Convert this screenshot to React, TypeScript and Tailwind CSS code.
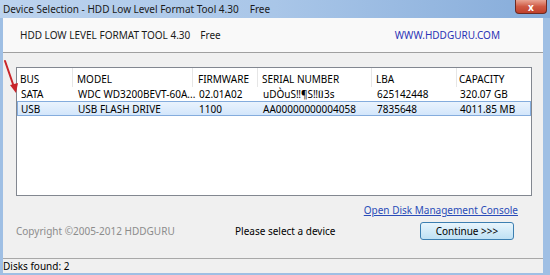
import React from "react";

const COLUMNS = ["BUS", "MODEL", "FIRMWARE", "SERIAL NUMBER", "LBA", "CAPACITY"];

const DEVICES = [
  {
    bus: "SATA",
    model: "WDC WD3200BEVT-60A...",
    firmware: "02.01A02",
    serial: "uDÒuS‼¶S‼⌷3s",
    lba: "625142448",
    capacity: "320.07 GB",
    selected: false,
  },
  {
    bus: "USB",
    model: "USB FLASH DRIVE",
    firmware: "1100",
    serial: "AA00000000004058",
    lba: "7835648",
    capacity: "4011.85 MB",
    selected: true,
  },
];

const gridCols = "grid grid-cols-[56px_120px_65px_114px_85px_1fr]";

function DeviceRow({ d }: { d: (typeof DEVICES)[number] }) {
  return (
    <div
      className={`${gridCols} h-[15px] items-center ${
        d.selected
          ? "border border-[#84acdd] bg-gradient-to-b from-[#eaf3fd] to-[#d3e6fb]"
          : "border border-transparent"
      }`}
    >
      <span className="pl-[3px]">{d.bus}</span>
      <span className="pl-[4px] whitespace-nowrap">{d.model}</span>
      <span className="pl-[5px]">{d.firmware}</span>
      <span className="pl-[4px] whitespace-nowrap">{d.serial}</span>
      <span className="pl-[4px]">{d.lba}</span>
      <span className="pl-[2px]">{d.capacity}</span>
    </div>
  );
}

export default function App() {
  return (
    <div className="relative flex h-[275px] w-[550px] flex-col overflow-hidden bg-[#9fbfe4] font-['Noto_Sans',sans-serif] text-[10px] text-black">
      {/* title bar */}
      <div className="flex h-[18px] shrink-0 items-center bg-gradient-to-r from-[#bcd3ee] via-[#a9c6e8] to-[#86acda] pl-[3px] text-[10px] text-[#1a1a1a]">
        <span>Device Selection - HDD Low Level Format Tool 4.30</span>
        <span className="ml-[11px]">Free</span>
      </div>

      <div className="flex min-h-0 flex-1 pl-[3px] pr-[7px] pb-[2px]">
        <div className="flex flex-1 flex-col bg-[#f0f0f0]">
          {/* header panel */}
          <div className="flex h-[35px] shrink-0 items-center justify-between border-b border-[#a0a0a0] bg-[#f9f9f9] pl-[17px] pr-[43px] text-[10px] text-[#1a1a1a]">
            <div>
              <span>HDD LOW LEVEL FORMAT TOOL 4.30</span>
              <span className="ml-[10px]">Free</span>
            </div>
            <span className="text-[#2b33b5]">WWW.HDDGURU.COM</span>
          </div>

          {/* device list */}
          <div className="ml-[13px] mt-[14px] h-[129px] w-[516px] border border-[#828790] bg-white">
            <div className={`${gridCols} h-[18px] items-center`}>
              {COLUMNS.map((c, i) => (
                <span
                  key={c}
                  className={`h-full pt-[4px] ${i === 0 ? "pl-[3px]" : i === 2 ? "pl-[5px]" : i === 5 ? "pl-[2px]" : "pl-[4px]"} ${
                    i < 5 ? "border-r border-[#e6e6e6]" : ""
                  }`}
                >
                  {c}
                </span>
              ))}
            </div>
            {DEVICES.map((d) => (
              <DeviceRow key={d.bus} d={d} />
            ))}
          </div>

          {/* bottom area */}
          <div className="relative flex flex-1 flex-col">
            <div className="flex justify-end pr-[25px] pt-[7px]">
              <span className="text-[#2a4cb8] underline">Open Disk Management Console</span>
            </div>
            <div className="mt-[4px] flex items-center pl-[13px] pr-[29px]">
              <span className="w-[219px] text-[#8c8c8c]">Copyright ©2005-2012 HDDGURU</span>
              <span>Please select a device</span>
              <button className="ml-auto h-[18px] w-[94px] rounded-[3px] border border-[#3c7fb1] bg-gradient-to-b from-[#e8f5fc] to-[#bfe1f4] text-[10px]">
                Continue &gt;&gt;&gt;
              </button>
            </div>
          </div>

          {/* status bar */}
          <div className="flex h-[15px] shrink-0 items-center border-t border-[#a8a8a8] bg-[#f0f0f0]">
            Disks found: 2
          </div>
        </div>
      </div>

      {/* close button */}
      <div className="absolute left-[515px] top-0 flex h-[14px] w-[32px] items-center justify-center rounded-b-[4px] border border-t-0 border-[#6d2a22] bg-gradient-to-b from-[#e8a493] via-[#cf5a44] to-[#c0402b] text-[10px] font-bold leading-none text-white">
        x
      </div>

      {/* red arrow annotation */}
      <svg className="absolute left-0 top-[58px]" width="24" height="40" viewBox="0 0 24 40">
        <line x1="5" y1="3" x2="14" y2="29" stroke="#c9252a" strokeWidth="2" strokeLinecap="round" />
        <polygon points="10,27 18,25 16,35" fill="#c9252a" />
      </svg>
    </div>
  );
}
